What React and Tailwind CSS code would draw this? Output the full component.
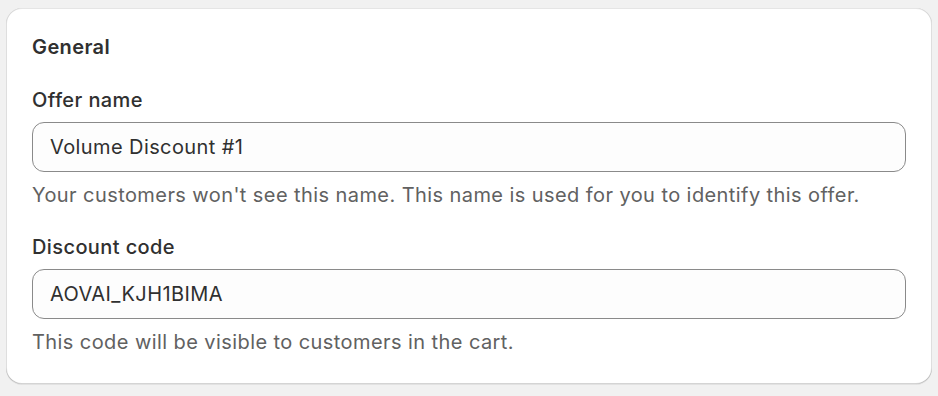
import React from 'react';

const font = { fontFamily: 'Inter, "Noto Sans", sans-serif' };

function Field({ label, value, help }) {
  return (
    <div>
      <label className="block text-[20px] leading-[24px] tracking-[0.4px] font-medium text-[#303030]">{label}</label>
      <div className="mt-[10px] h-[50px] rounded-[12px] border border-[#8a8a8a] bg-[#fdfdfd] px-[17px] flex items-center">
        <span className="text-[20px] tracking-[0.4px] text-[#303030]">{value}</span>
      </div>
      <p className="mt-[11px] text-[20px] leading-[24px] tracking-[0.42px] text-[#616161]">{help}</p>
    </div>
  );
}

export default function App() {
  return (
    <div className="w-[938px] h-[396px] bg-[#f1f1f1] pt-[8px] pl-[6px] pr-[6px]" style={font}>
      <div className="bg-white rounded-[16px] shadow-[0_1px_0_0_rgba(26,26,26,0.07),0_1px_0_0_rgba(204,204,204,0.5)_inset,0_-1px_0_0_rgba(0,0,0,0.17)_inset,-1px_0_0_0_rgba(0,0,0,0.13)_inset,1px_0_0_0_rgba(0,0,0,0.13)_inset] px-[26px] pt-[27px] pb-[30px]">
        <h2 className="text-[20px] leading-[24px] tracking-[0.4px] font-semibold text-[#303030]">General</h2>
        <div className="mt-[29px] flex flex-col gap-[28px]">
          <Field
            label="Offer name"
            value="Volume Discount #1"
            help="Your customers won't see this name. This name is used for you to identify this offer."
          />
          <Field
            label="Discount code"
            value="AOVAI_KJH1BIMA"
            help="This code will be visible to customers in the cart."
          />
        </div>
      </div>
    </div>
  );
}
